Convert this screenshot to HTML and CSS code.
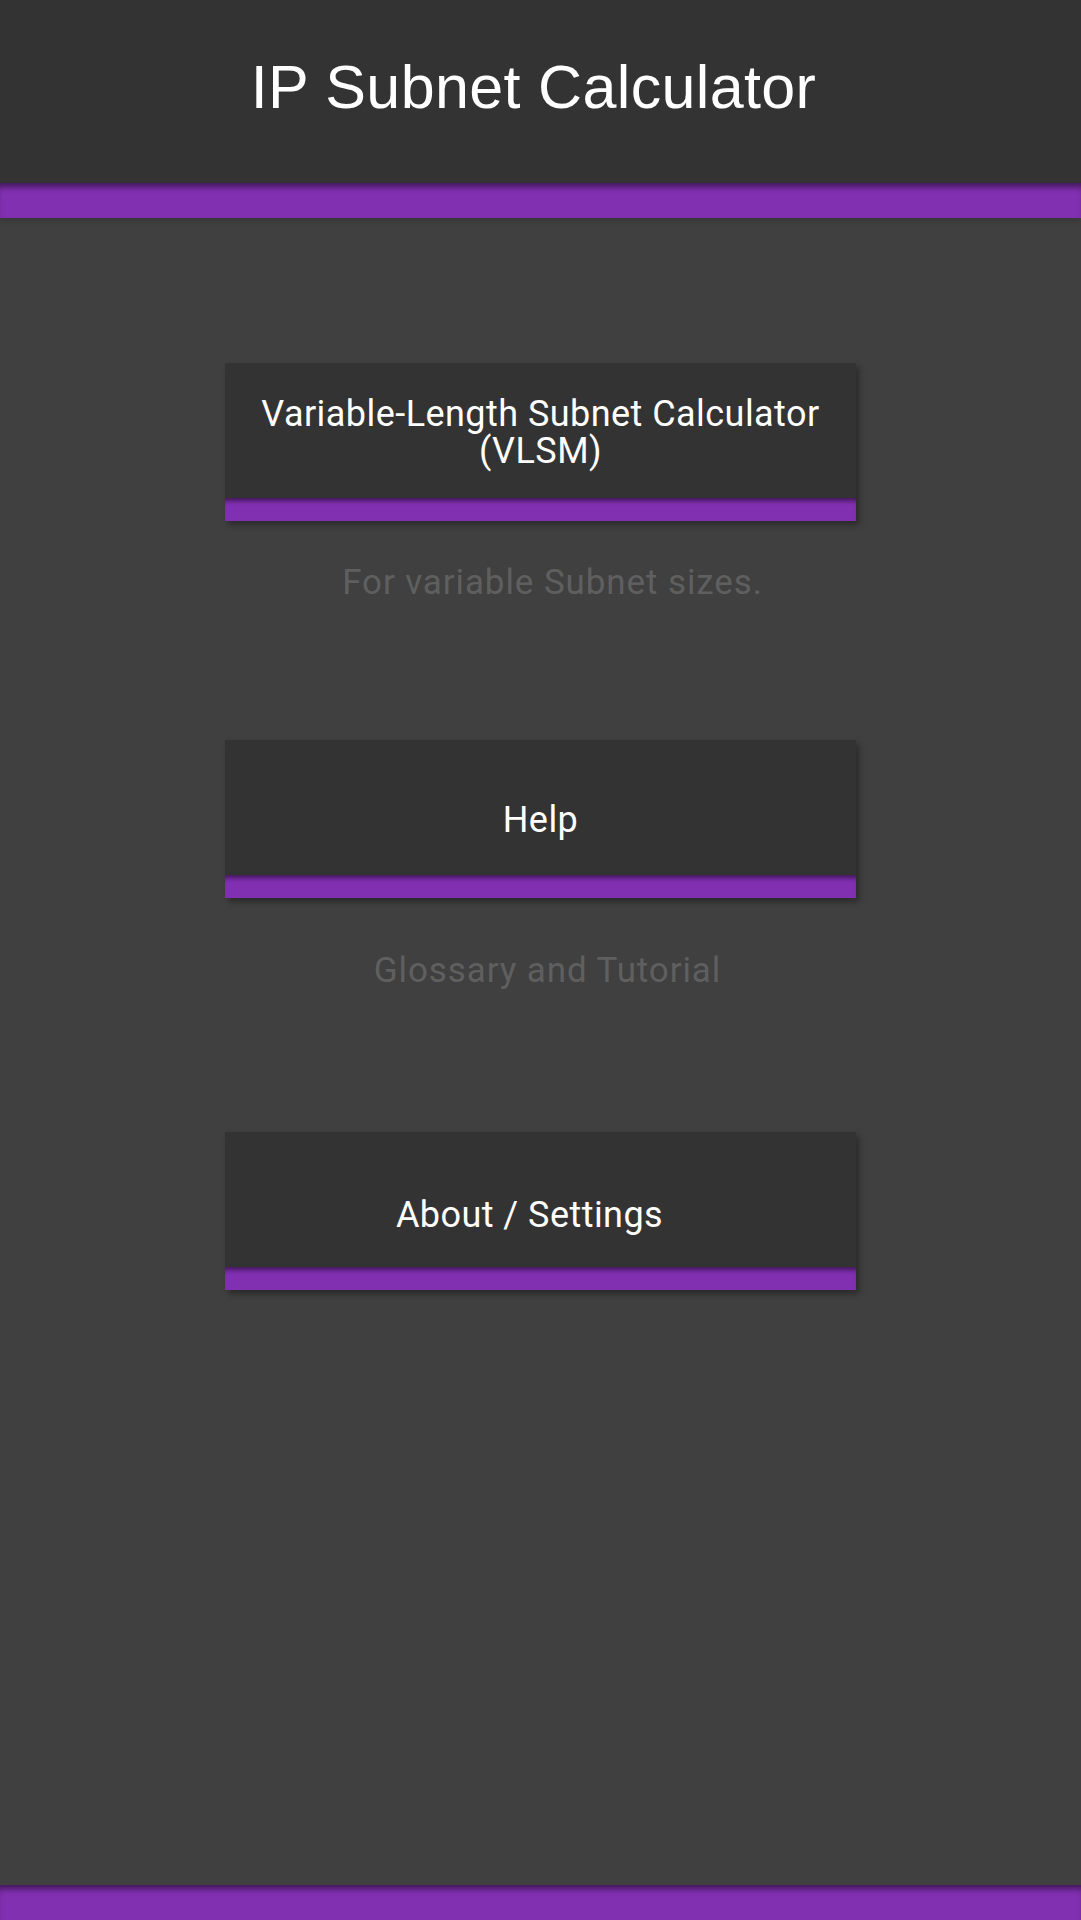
FILE: index.html
```html
<!DOCTYPE html>
<html lang="en">
<head>
<meta charset="utf-8">
<title>IP Subnet Calculator</title>
<link rel="stylesheet" href="styles.css">
</head>
<body>
<header class="header">
  <h1 class="title">IP Subnet Calculator</h1>
</header>
<div class="accent"></div>
<main class="menu">
  <a class="card card-vlsm" href="#">
    <div class="card-face">Variable-Length Subnet Calculator<br>(VLSM)</div>
    <div class="card-bar"></div>
  </a>
  <p class="caption caption-vlsm">For variable Subnet sizes.</p>
  <a class="card card-help" href="#">
    <div class="card-face">Help</div>
    <div class="card-bar"></div>
  </a>
  <p class="caption caption-help">Glossary and Tutorial</p>
  <a class="card card-about" href="#">
    <div class="card-face">About / Settings</div>
    <div class="card-bar"></div>
  </a>
</main>
<footer class="footer"></footer>
</body>
</html>
```
FILE: styles.css
```css
html, body {
  margin: 0;
  padding: 0;
}
body {
  background: #404040;
  min-height: 1920px;
  display: flex;
  flex-direction: column;
}
.header {
  height: 183px;
  box-sizing: border-box;
  background: #333333;
  padding-top: 57px;
  padding-right: 14px;
  text-align: center;
}
.title {
  margin: 0;
  font-family: "Liberation Sans", Arial, sans-serif;
  font-weight: normal;
  font-size: 61px;
  line-height: 61px;
  letter-spacing: 0.35px;
  color: #ffffff;
}
.accent {
  height: 35px;
  background: #8230b2;
  box-shadow: inset 0 7px 6px -3px rgba(0, 0, 0, 0.5), 0 3px 5px rgba(0, 0, 0, 0.15);
}
.menu {
  flex: 1;
  display: flex;
  flex-direction: column;
  align-items: center;
  padding-top: 145px;
}
.card {
  display: block;
  width: 631px;
  text-decoration: none;
  box-shadow: 3px 4px 6px rgba(0, 0, 0, 0.35);
}
.card-face {
  height: 135px;
  box-sizing: border-box;
  background: #333333;
  color: #ffffff;
  font-family: Roboto, "Noto Sans", sans-serif;
  font-size: 36px;
  line-height: 37px;
  letter-spacing: 0.45px;
  text-align: center;
}
.card-bar {
  height: 23px;
  background: #8230b2;
  box-shadow: inset 0 6px 5px -3px rgba(0, 0, 0, 0.5);
}
.card-vlsm .card-face { padding-top: 33px; }
.card-help { margin-top: 137px; }
.card-help .card-face { padding-top: 62px; }
.card-about { margin-top: 141px; }
.card-about .card-face { padding-top: 65px; padding-right: 22px; }
.caption {
  margin: 0;
  font-family: Roboto, "Noto Sans", sans-serif;
  font-size: 35px;
  line-height: 41px;
  letter-spacing: 0.9px;
  color: #5f5f5f;
  text-align: center;
}
.caption-vlsm { margin-top: 41px; padding-left: 24px; }
.caption-help { margin-top: 52px; padding-left: 14px; }
.footer {
  height: 35px;
  background: #8230b2;
  box-shadow: inset 0 7px 6px -3px rgba(0, 0, 0, 0.5);
}
```
